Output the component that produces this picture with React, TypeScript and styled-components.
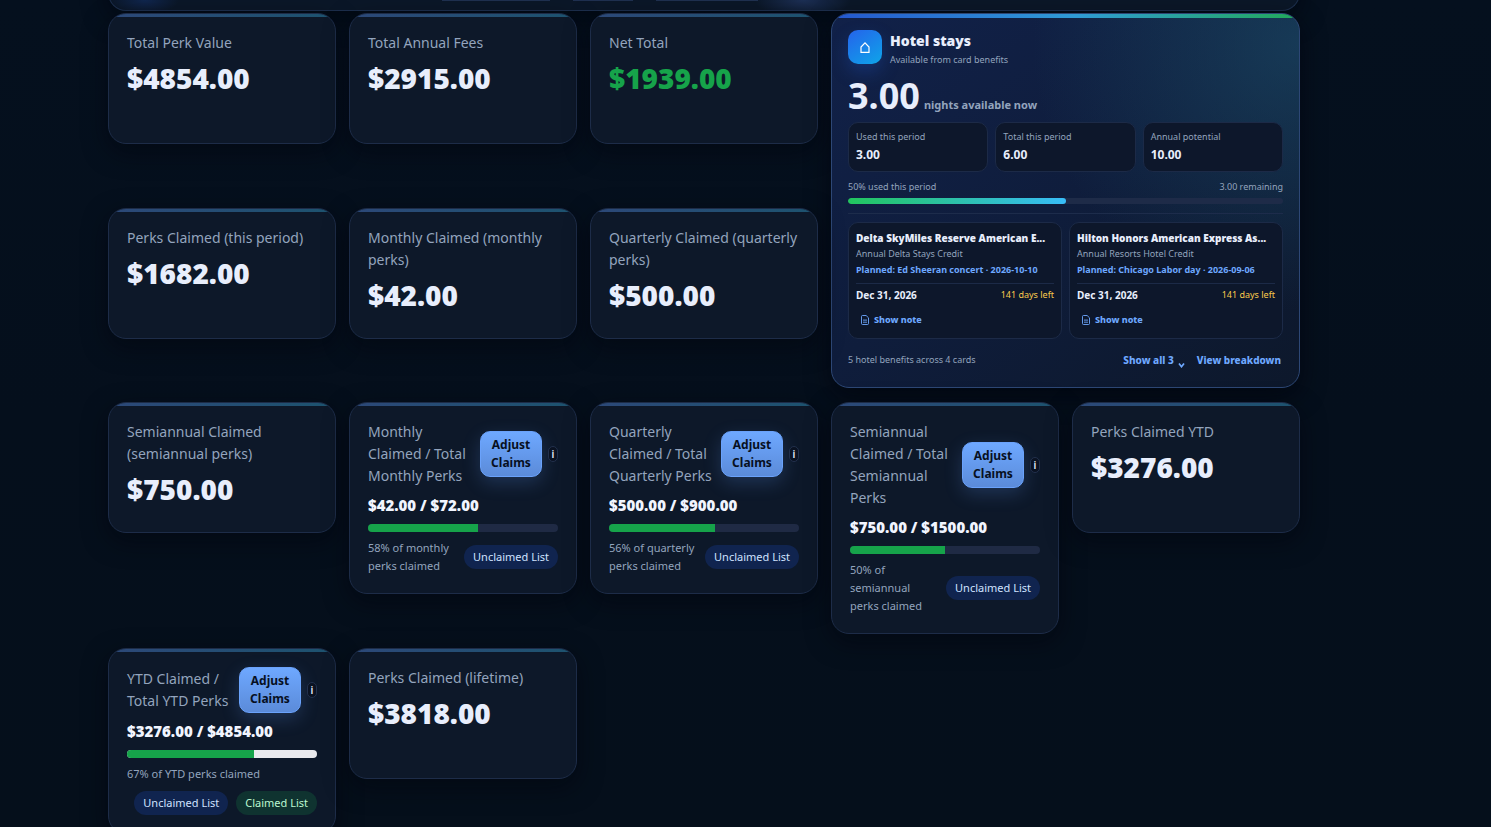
import React from 'react';
import styled, { createGlobalStyle } from 'styled-components';

const GlobalStyle = createGlobalStyle`
  *, *::before, *::after { box-sizing: border-box; }
  body {
    margin: 0;
    background: #050f1c;
    color: #e8eefc;
    font-family: "Noto Sans", "Open Sans", sans-serif;
  }
  button { font-family: inherit; cursor: pointer; }
  h2, h3, p, dl, dd { margin: 0; }
`;

const Page = styled.div`
  height: 100vh;
  overflow: hidden;
  padding: 0 191px 0 108px;
  background: linear-gradient(180deg, #05101e 0%, #050f1c 50%, #050f1b 100%);
`;

const TopPanel = styled.header`
  height: 51px;
  margin: -40px 0 2px;
  padding: 40px 20px 0 333px;
  display: flex;
  align-items: flex-start;
  gap: 23px;
  border: 1px solid #1d2f4d;
  border-top: 0;
  border-radius: 18px;
  background:
    radial-gradient(ellipse 34px 14px at 36px 40px, #10264f, transparent),
    radial-gradient(ellipse 48px 18px at 694px 40px, #1c2f55, transparent),
    #0b1728;
  box-shadow: 0 8px 24px rgba(2, 4, 12, 0.5);
`;

const TabEdge = styled.span<{ $width: number }>`
  width: ${(p) => p.$width}px;
  height: 1px;
  background: #1f3050;
`;

const Grid = styled.main`
  display: grid;
  grid-template-columns: repeat(5, minmax(0, 1fr));
  gap: 14px 13px;
  align-items: start;
`;

const Card = styled.section`
  position: relative;
  overflow: hidden;
  min-height: 131px;
  padding: 18px;
  border: 1px solid #1d2c48;
  border-radius: 18px;
  background: #0d1829;
  box-shadow: 0 8px 24px rgba(2, 4, 12, 0.5);

  &::before {
    content: '';
    position: absolute;
    inset: 0 0 auto;
    height: 3px;
    background: linear-gradient(90deg, #2c4878, #1d536f);
  }
`;

const CardTitle = styled.h2`
  flex: 1;
  font-size: 14px;
  font-weight: 400;
  line-height: 22px;
  color: #93a4bd;
`;

const CardValue = styled.p<{ $positive?: boolean }>`
  margin-top: 3px;
  font-size: 28px;
  font-weight: 900;
  line-height: 43px;
  color: ${(p) => (p.$positive ? '#16a34a' : '#e8eefc')};
`;

const CardHead = styled.div`
  display: flex;
  align-items: center;
  gap: 6px;
  margin-bottom: 7px;
`;

const AdjustButton = styled.button`
  flex: 0 0 62px;
  height: 46px;
  padding: 0;
  border: 1px solid #6aa2fb;
  border-radius: 10px;
  background: linear-gradient(180deg, #6ea8ff, #5b8bd9);
  color: #07101f;
  font-size: 12px;
  font-weight: 700;
  line-height: 18px;
  box-shadow: 0 6px 18px rgba(96, 150, 240, 0.22);
`;

const InfoButton = styled.button`
  flex: 0 0 10px;
  height: 16px;
  padding: 0;
  border: 1px solid #22304c;
  border-radius: 5px;
  background: #0a1222;
  color: #e8eefc;
  font-size: 10px;
  font-weight: 600;
  line-height: 13px;
`;

const Ratio = styled.p`
  font-size: 15px;
  font-weight: 900;
  line-height: 22px;
  color: #f1f5ff;
`;

const Bar = styled.div<{ $light?: boolean }>`
  height: 8px;
  margin: 8px 0 7px;
  overflow: hidden;
  border-radius: 4px;
  background: ${(p) => (p.$light ? '#e9e9ed' : '#1f2a44')};
`;

const BarFill = styled.div`
  height: 100%;
  background: #16a34a;
`;

const CardFoot = styled.div<{ $stacked?: boolean }>`
  display: flex;
  flex-direction: ${(p) => (p.$stacked ? 'column' : 'row')};
  align-items: ${(p) => (p.$stacked ? 'stretch' : 'center')};
  gap: 8px;
`;

const Caption = styled.p`
  flex: 1;
  font-size: 11px;
  line-height: 18px;
  color: #93a4bd;
`;

const Pills = styled.div`
  display: flex;
  justify-content: flex-end;
  gap: 8px;
`;

const Pill = styled.button<{ $green?: boolean }>`
  height: 24px;
  padding: 0 9px;
  border: 0;
  border-radius: 12px;
  background: ${(p) => (p.$green ? '#0f3330' : '#10244f')};
  color: ${(p) => (p.$green ? '#bbf7d0' : '#cfe2ff')};
  font-size: 11px;
  line-height: 18px;
  white-space: nowrap;
`;

const HotelCard = styled.section`
  position: relative;
  overflow: hidden;
  grid-column: span 2;
  grid-row: span 2;
  padding: 16px;
  border: 1px solid #2d4775;
  border-radius: 18px;
  background:
    radial-gradient(circle at 100% 8%, rgba(30, 86, 112, 0.5), transparent 46%),
    linear-gradient(145deg, #112149 0%, #0f1d3c 50%, #0d182b 100%);
  box-shadow: 0 8px 24px rgba(2, 4, 12, 0.6);

  &::before {
    content: '';
    position: absolute;
    inset: 0 0 auto;
    height: 4px;
    background: linear-gradient(90deg, #2457cf, #2f9bd6 52%, #22a95a);
  }
`;

const HotelHead = styled.div`
  display: flex;
  align-items: flex-start;
  gap: 8px;
`;

const HotelIcon = styled.div`
  display: grid;
  place-items: center;
  width: 34px;
  height: 34px;
  border-radius: 10px;
  background: linear-gradient(145deg, #2563eb, #0ea5e9);
  box-shadow: 0 8px 18px rgba(37, 99, 235, 0.25);
`;

const HotelTitle = styled.h2`
  font-size: 14px;
  font-weight: 900;
  line-height: 22px;
`;

const SmallText = styled.p`
  font-size: 9px;
  line-height: 16px;
  color: #93a4bd;
`;

const Nights = styled.p`
  display: flex;
  align-items: baseline;
  gap: 4px;
  height: 46px;
  margin-top: 5px;
  font-size: 36px;
  font-weight: 700;
  line-height: 46px;
`;

const NightsUnit = styled.span`
  font-size: 11px;
  font-weight: 700;
  line-height: 16px;
  color: #93a4bd;
`;

const Stats = styled.dl`
  display: grid;
  grid-template-columns: repeat(3, 1fr);
  gap: 7px;
  margin-top: 3px;
`;

const Stat = styled.div`
  height: 50px;
  padding: 6px 7px;
  border: 1px solid #1c2a47;
  border-radius: 10px;
  background: #0d172b;
`;

const StatLabel = styled.dt`
  font-size: 9px;
  line-height: 16px;
  color: #93a4bd;
`;

const StatValue = styled.dd`
  font-size: 12px;
  font-weight: 700;
  line-height: 20px;
`;

const Between = styled.div`
  display: flex;
  align-items: center;
  justify-content: space-between;
`;

const Usage = styled.div`
  margin-top: 7px;
  padding-bottom: 9px;
  border-bottom: 1px solid #1d2c4b;
`;

const UsageBar = styled.div`
  height: 6px;
  margin-top: 3px;
  overflow: hidden;
  border-radius: 3px;
  background: #1e2b48;
`;

const UsageFill = styled.div`
  height: 100%;
  border-radius: 3px;
  background: linear-gradient(90deg, #22c55e, #38bdf8);
`;

const Benefits = styled.div`
  display: grid;
  grid-template-columns: repeat(2, minmax(0, 1fr));
  gap: 7px;
  margin-top: 8px;
`;

const Benefit = styled.article`
  height: 117px;
  padding: 7px;
  border: 1px solid #1c2a47;
  border-radius: 10px;
  background: #0d172b;
`;

const BenefitName = styled.h3`
  font-size: 10px;
  font-weight: 900;
  line-height: 16px;
  white-space: nowrap;
`;

const Planned = styled.p`
  padding-bottom: 5px;
  border-bottom: 1px solid #1c2a47;
  font-size: 9px;
  font-weight: 700;
  line-height: 16px;
  color: #6ea8ff;
`;

const DueDate = styled.span`
  font-size: 10px;
  font-weight: 700;
  line-height: 22px;
`;

const DaysLeft = styled.span`
  font-size: 9px;
  line-height: 22px;
  color: #facc4d;
`;

const LinkButton = styled.button`
  display: inline-flex;
  align-items: center;
  gap: 4px;
  padding: 0 2px;
  border: 0;
  background: none;
  color: #6ea8ff;
  font-size: 10px;
  font-weight: 800;
  line-height: 16px;
`;

const NoteButton = styled(LinkButton)`
  margin: 6px 0 0 2px;
  font-size: 9px;
`;

const HotelFoot = styled(Between)`
  margin: 13px 0 3px;
`;

const FootLinks = styled.div`
  display: flex;
  gap: 8px;
`;

const HomeIcon = () => (
  <svg width="12" height="14" viewBox="0 0 12 14" fill="none" stroke="#fff" strokeWidth="1.2" aria-hidden="true">
    <path d="M2 12.4V7L6 2.8 10 7v5.4z" />
  </svg>
);

const NoteIcon = () => (
  <svg width="10" height="10" viewBox="0 0 10 10" fill="none" stroke="#6ea8ff" aria-hidden="true">
    <path d="M1.5 1.5a1 1 0 0 1 1-1h3.6l2.4 2.3v5.7a1 1 0 0 1-1 1h-5a1 1 0 0 1-1-1zM3 5.1h4M3 7.2h4" strokeWidth="0.9" />
  </svg>
);

const Chevron = () => (
  <svg width="7" height="16" viewBox="0 0 7 16" fill="none" stroke="#6ea8ff" strokeWidth="1.7" aria-hidden="true">
    <path d="M1 11.5l2.5 3.2L6 11.5" />
  </svg>
);

function StatCard({ title, value, positive }: { title: string; value: string; positive?: boolean }) {
  return (
    <Card>
      <CardTitle>{title}</CardTitle>
      <CardValue $positive={positive}>{value}</CardValue>
    </Card>
  );
}

type ProgressProps = { title: string; ratio: string; percent: number; caption: string; ytd?: boolean };

function ProgressCard({ title, ratio, percent, caption, ytd }: ProgressProps) {
  return (
    <Card>
      <CardHead>
        <CardTitle>{title}</CardTitle>
        <AdjustButton>Adjust<br />Claims</AdjustButton>
        <InfoButton aria-label={`About ${title}`}>i</InfoButton>
      </CardHead>
      <Ratio>{ratio}</Ratio>
      <Bar $light={ytd}>
        <BarFill style={{ width: `${percent}%` }} />
      </Bar>
      <CardFoot $stacked={ytd}>
        <Caption>{caption}</Caption>
        <Pills>
          <Pill>Unclaimed List</Pill>
          {ytd && <Pill $green>Claimed List</Pill>}
        </Pills>
      </CardFoot>
    </Card>
  );
}

function BenefitCard({ name, credit, planned }: { name: string; credit: string; planned: string }) {
  return (
    <Benefit>
      <BenefitName>{name}</BenefitName>
      <SmallText>{credit}</SmallText>
      <Planned>{planned}</Planned>
      <Between>
        <DueDate>Dec 31, 2026</DueDate>
        <DaysLeft>141 days left</DaysLeft>
      </Between>
      <NoteButton><NoteIcon />Show note</NoteButton>
    </Benefit>
  );
}

function HotelStays() {
  const stats = [
    ['Used this period', '3.00'],
    ['Total this period', '6.00'],
    ['Annual potential', '10.00'],
  ];
  return (
    <HotelCard>
      <HotelHead>
        <HotelIcon><HomeIcon /></HotelIcon>
        <div>
          <HotelTitle>Hotel stays</HotelTitle>
          <SmallText>Available from card benefits</SmallText>
        </div>
      </HotelHead>
      <Nights>3.00 <NightsUnit>nights available now</NightsUnit></Nights>
      <Stats>
        {stats.map(([label, value]) => (
          <Stat key={label}>
            <StatLabel>{label}</StatLabel>
            <StatValue>{value}</StatValue>
          </Stat>
        ))}
      </Stats>
      <Usage>
        <Between>
          <SmallText>50% used this period</SmallText>
          <SmallText>3.00 remaining</SmallText>
        </Between>
        <UsageBar><UsageFill style={{ width: '50%' }} /></UsageBar>
      </Usage>
      <Benefits>
        <BenefitCard
          name="Delta SkyMiles Reserve American E..."
          credit="Annual Delta Stays Credit"
          planned="Planned: Ed Sheeran concert · 2026-10-10"
        />
        <BenefitCard
          name="Hilton Honors American Express As..."
          credit="Annual Resorts Hotel Credit"
          planned="Planned: Chicago Labor day · 2026-09-06"
        />
      </Benefits>
      <HotelFoot>
        <SmallText>5 hotel benefits across 4 cards</SmallText>
        <FootLinks>
          <LinkButton>Show all 3<Chevron /></LinkButton>
          <LinkButton>View breakdown</LinkButton>
        </FootLinks>
      </HotelFoot>
    </HotelCard>
  );
}

export default function App() {
  return (
    <Page>
      <GlobalStyle />
      <TopPanel>
        <TabEdge $width={108} />
        <TabEdge $width={60} />
        <TabEdge $width={102} />
      </TopPanel>
      <Grid>
        <StatCard title="Total Perk Value" value="$4854.00" />
        <StatCard title="Total Annual Fees" value="$2915.00" />
        <StatCard title="Net Total" value="$1939.00" positive />
        <HotelStays />
        <StatCard title="Perks Claimed (this period)" value="$1682.00" />
        <StatCard title="Monthly Claimed (monthly perks)" value="$42.00" />
        <StatCard title="Quarterly Claimed (quarterly perks)" value="$500.00" />
        <StatCard title="Semiannual Claimed (semiannual perks)" value="$750.00" />
        <ProgressCard
          title="Monthly Claimed / Total Monthly Perks"
          ratio="$42.00 / $72.00"
          percent={58}
          caption="58% of monthly perks claimed"
        />
        <ProgressCard
          title="Quarterly Claimed / Total Quarterly Perks"
          ratio="$500.00 / $900.00"
          percent={56}
          caption="56% of quarterly perks claimed"
        />
        <ProgressCard
          title="Semiannual Claimed / Total Semiannual Perks"
          ratio="$750.00 / $1500.00"
          percent={50}
          caption="50% of semiannual perks claimed"
        />
        <StatCard title="Perks Claimed YTD" value="$3276.00" />
        <ProgressCard
          title="YTD Claimed / Total YTD Perks"
          ratio="$3276.00 / $4854.00"
          percent={67}
          caption="67% of YTD perks claimed"
          ytd
        />
        <StatCard title="Perks Claimed (lifetime)" value="$3818.00" />
      </Grid>
    </Page>
  );
}
